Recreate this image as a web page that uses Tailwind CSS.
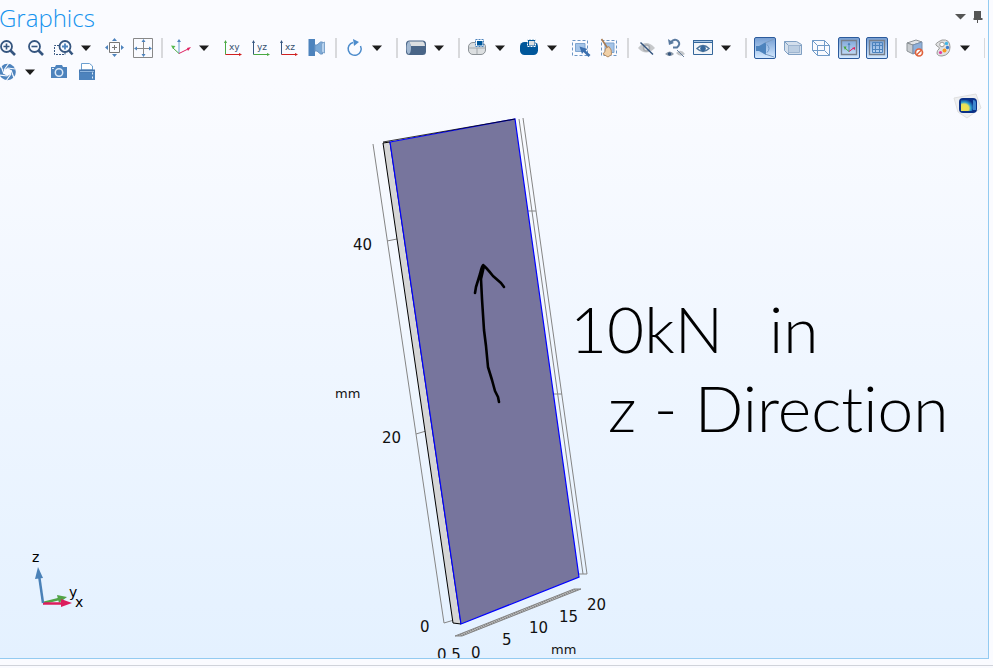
<!DOCTYPE html>
<html lang="en">
<head>
  <meta charset="UTF-8">
  <title>Graphics</title>
  <meta name="viewport" content="width=device-width, initial-scale=1.0">
  <script src="https://cdn.jsdelivr.net/npm/@tailwindcss/browser@4"></script>
</head>
<body class="min-h-screen overflow-x-hidden bg-[#fafbff] font-['Open_Sans',sans-serif]">

<section class="mr-1 border-r border-b border-[#93cbf1]">
  <header class="flex h-9 items-start justify-between">
    <h1 class="-ml-px text-2xl/9 font-light text-[#1593ee]">Graphics</h1>
    <div class="flex items-center gap-0.5 pt-2 pr-0.5">
      <button aria-label="Window menu" class="flex h-4 w-4 items-center justify-center">
        <svg class="h-4 w-4" viewBox="0 0 16 16"><path d="M3 6h11l-5.500 5.500z" fill="#555"/></svg>
      </button>
      <button aria-label="Pin" class="flex h-4 w-4 items-center justify-center">
        <svg class="h-4 w-4" viewBox="0 0 16 16"><path d="M4 3h7v7h1.500v2h-9v-2H4z" fill="#555"/><path d="M7.500 12v3" stroke="#555"/></svg>
      </button>
    </div>
  </header>

  <!-- Toolbar -->
  <div role="toolbar" aria-label="Graphics toolbar" class="flex flex-col">
    <div class="-ml-[6px] flex h-6 items-center">
      <button aria-label="Zoom in" class="flex w-7 shrink-0 justify-center">
        <svg class="h-[22px] w-[22px]" viewBox="0 0 22 22" fill="none"><circle cx="9.500" cy="9.500" r="5.500" stroke="#35557f" stroke-width="1.800"/><path d="M13.500 13.500l4.500 4.500" stroke="#35557f" stroke-width="2.600"/><path d="M6.500 9.500h6M9.500 6.500v6" stroke="#35557f" stroke-width="1.600"/></svg>
      </button>
      <button aria-label="Zoom out" class="flex w-7 shrink-0 justify-center">
        <svg class="h-[22px] w-[22px]" viewBox="0 0 22 22" fill="none"><circle cx="9.500" cy="9.500" r="5.500" stroke="#35557f" stroke-width="1.800"/><path d="M13.500 13.500l4.500 4.500" stroke="#35557f" stroke-width="2.600"/><path d="M6.500 9.500h6" stroke="#35557f" stroke-width="1.600"/></svg>
      </button>
      <button aria-label="Zoom box" class="flex w-7 shrink-0 justify-center">
        <svg class="h-[22px] w-[22px]" viewBox="0 0 22 22" fill="none"><path d="M6 8.500H1.500v9H12v-2" stroke="#35557f" stroke-dasharray="2 1"/><circle cx="12" cy="9.500" r="5.500" fill="#fafbff" stroke="#35557f" stroke-width="1.800"/><path d="M16 13.500l3.500 4" stroke="#35557f" stroke-width="2.600"/><path d="M9 9.500h6M12 6.500v6" stroke="#4d83bd" stroke-width="1.800"/></svg>
      </button>
      <button aria-label="Zoom options" class="w-[23px] shrink-0"><svg class="ml-[3px] h-[10px] w-[10px]" viewBox="0 0 10 10"><path d="M0 2.500h10l-5 5.500z" fill="#1d1d1d"/></svg></button>
      <button aria-label="Zoom to selection" class="flex w-7 shrink-0 justify-center">
        <svg class="h-[22px] w-[22px]" viewBox="0 0 22 22" fill="none"><path d="M5.500 5.500h10v10h-10zM8 10.500h5M10.500 8v5" stroke="#777"/><path d="M8 4l2.500-3L13 4zM8 17l2.500 3 2.500-3zM4 8l-3 2.500L4 13zM17 8l3 2.500-3 2.500z" fill="#4d83bd"/></svg>
      </button>
      <button aria-label="Zoom extents" class="flex w-7 shrink-0 justify-center">
        <svg class="h-[22px] w-[22px]" viewBox="0 0 22 22" fill="none"><path d="M1.500 1.500h19v19h-19z" stroke="#888"/><path d="M3 11.500h16M11.500 3v16" stroke="#888"/><path d="M9.500 5l2-3 2 3zM9.500 17l2 3 2-3zM5 9.500l-3 2 3 2zM17 9.500l3 2-3 2z" fill="#4d83bd"/></svg>
      </button>
      <span class="mx-[4px] h-5 w-[2px] shrink-0 bg-[#d8d9dc]"></span>
      <button aria-label="Go to default view" class="flex w-7 shrink-0 justify-center">
        <svg class="h-[22px] w-[22px]" viewBox="0 0 22 22" fill="none"><path d="M9 16.500V5" stroke="#6b9fd0"/><path d="M9 16.500l-6-5.500" stroke="#49a942"/><path d="M9 16.500l10-5" stroke="#df2060"/><path d="M7 5l2-3 2 3z" fill="#4d83bd"/><path d="M1 8.500l4.500.5L3 12z" fill="#55b94d"/><path d="M21 10l-3 4-1-3z" fill="#df2060"/></svg>
      </button>
      <button aria-label="View options" class="w-6 shrink-0"><svg class="ml-[4px] h-[10px] w-[10px]" viewBox="0 0 10 10"><path d="M0 2.500h10l-5 5.500z" fill="#1d1d1d"/></svg></button>
      <button aria-label="Go to XY view" class="flex w-7 shrink-0 justify-center">
        <svg class="h-[22px] w-[22px]" viewBox="0 0 22 22"><path d="M3.500 17.500V4" stroke="#49a942"/><path d="M2 6l1.500-3L5 6z" fill="#49a942"/><path d="M3.500 17.500H18" stroke="#d02020"/><path d="M17 16l3 1.500-3 1.500z" fill="#d02020"/><text x="7" y="13" font-size="9" font-family="DejaVu Sans" fill="#35506f">xy</text></svg>
      </button>
      <button aria-label="Go to YZ view" class="flex w-7 shrink-0 justify-center">
        <svg class="h-[22px] w-[22px]" viewBox="0 0 22 22"><path d="M3.500 17.500V4" stroke="#35557f"/><path d="M2 6l1.500-3L5 6z" fill="#35557f"/><path d="M3.500 17.500H18" stroke="#49a942"/><path d="M17 16l3 1.500-3 1.500z" fill="#49a942"/><text x="7" y="13" font-size="9" font-family="DejaVu Sans" fill="#35506f">yz</text></svg>
      </button>
      <button aria-label="Go to XZ view" class="flex w-7 shrink-0 justify-center">
        <svg class="h-[22px] w-[22px]" viewBox="0 0 22 22"><path d="M3.500 17.500V4" stroke="#35557f"/><path d="M2 6l1.500-3L5 6z" fill="#35557f"/><path d="M3.500 17.500H18" stroke="#d02020"/><path d="M17 16l3 1.500-3 1.500z" fill="#d02020"/><text x="7" y="13" font-size="9" font-family="DejaVu Sans" fill="#35506f">xz</text></svg>
      </button>
      <button aria-label="Camera projection" class="flex w-7 shrink-0 justify-center">
        <svg class="h-[22px] w-[22px]" viewBox="0 0 22 22"><path d="M2.500 2h6.500v17H2.500z" fill="#4d83bd"/><path d="M9 8h2l3.500-3h2v12h-2L11 14H9z" fill="#7ba9d7" stroke="#6a94c3"/><path d="M15.500 6.500l3-1.500v11l-3-1z" fill="#b5d1ee" stroke="#7fa5cc"/></svg>
      </button>
      <span class="mx-[4px] h-5 w-[2px] shrink-0 bg-[#d8d9dc]"></span>
      <button aria-label="Rotate" class="flex w-7 shrink-0 justify-center">
        <svg class="h-[22px] w-[22px]" viewBox="0 0 22 22" fill="none"><path d="M9 5.500A6.500 6.500 0 1 0 16.500 9" stroke="#4d8ccc" stroke-width="1.500"/><path d="M9 2l6 3-5 4z" fill="#4d8ccc"/></svg>
      </button>
      <button aria-label="Rotate options" class="w-[23px] shrink-0"><svg class="ml-[3px] h-[10px] w-[10px]" viewBox="0 0 10 10"><path d="M0 2.500h10l-5 5.500z" fill="#1d1d1d"/></svg></button>
      <span class="mx-[4px] h-5 w-[2px] shrink-0 bg-[#d8d9dc]"></span>
      <button aria-label="Scene appearance" class="flex w-7 shrink-0 justify-center">
        <svg class="h-[22px] w-[22px]" viewBox="0 0 22 22"><rect x="1" y="3.500" width="20" height="14.500" rx="3.500" fill="#496587"/><path d="M4 4.500h14q2 1 2 4.500H6z" fill="#dcdfe1"/><path d="M3.500 4.500q2.500 1 2.500 6.500t-2.500 6q-2-1-2-6t2-6.500z" fill="#a3b9d2"/></svg>
      </button>
      <button aria-label="Scene appearance options" class="w-6 shrink-0"><svg class="ml-[4px] h-[10px] w-[10px]" viewBox="0 0 10 10"><path d="M0 2.500h10l-5 5.500z" fill="#1d1d1d"/></svg></button>
      <span class="mx-[4px] h-5 w-[2px] shrink-0 bg-[#d8d9dc]"></span>
      <button aria-label="Select objects" class="flex w-7 shrink-0 justify-center">
        <svg class="h-[22px] w-[22px]" viewBox="0 0 22 22"><rect x="1.500" y="5.500" width="17" height="12" rx="4.500" fill="#dcdfe1" stroke="#8b9196"/><path d="M1.500 11h17M10 11v6" stroke="#a4a9ad"/><path d="M8.500 2.500h8v7h-8z" fill="#fff" stroke="#4d83bd" stroke-dasharray="2 1"/><path d="M10 4h5.500v4.500H10z" fill="#00579b"/></svg>
      </button>
      <button aria-label="Select objects options" class="w-[23px] shrink-0"><svg class="ml-[3px] h-[10px] w-[10px]" viewBox="0 0 10 10"><path d="M0 2.500h10l-5 5.500z" fill="#1d1d1d"/></svg></button>
      <button aria-label="Select domains" class="flex w-7 shrink-0 justify-center">
        <svg class="h-[22px] w-[22px]" viewBox="0 0 22 22"><rect x="2" y="5" width="18" height="13" rx="4.500" fill="#00579b"/><path d="M9.500 2.500h8v7h-8z" fill="#00579b" stroke="#fff" stroke-dasharray="2 1"/><path d="M11 4h5.500v4.500H11z" fill="#dcdfe1"/></svg>
      </button>
      <button aria-label="Select domains options" class="w-6 shrink-0"><svg class="ml-[4px] h-[10px] w-[10px]" viewBox="0 0 10 10"><path d="M0 2.500h10l-5 5.500z" fill="#1d1d1d"/></svg></button>
      <button aria-label="Select box" class="flex w-7 shrink-0 justify-center">
        <svg class="h-[22px] w-[22px]" viewBox="0 0 22 22"><path d="M2.500 3.500h15v15h-15z" fill="none" stroke="#6b95c4" stroke-dasharray="3 2"/><path d="M5.500 6.500h9.500v8H5.500z" fill="#a4c4e8" stroke="#7fa5d0"/><path d="M9.500 9.500l8 2.500-2 1.500 5 4.500-2 2-5-5-1.500 2z" fill="#3b6fae"/></svg>
      </button>
      <button aria-label="Deselect box" class="flex w-7 shrink-0 justify-center">
        <svg class="h-[22px] w-[22px]" viewBox="0 0 22 22"><path d="M3.500 3.500h15v15h-15z" fill="none" stroke="#6b95c4" stroke-dasharray="3 2"/><path d="M7 6h9v9.500H7z" fill="#a4c4e8" stroke="#7fa5d0"/><path d="M3.500 2l6 9" stroke="#a87b52" stroke-width="1.600"/><path d="M7.500 11.500l3.500-2q3 3 2.500 8l-3.500 2.500-5-3q2.500-2 2.500-5.500z" fill="#f0d0a7" stroke="#b58d65"/></svg>
      </button>
      <span class="mx-[4px] h-5 w-[2px] shrink-0 bg-[#d8d9dc]"></span>
      <button aria-label="Hide selected" class="flex w-7 shrink-0 justify-center">
        <svg class="h-[22px] w-[22px]" viewBox="0 0 22 22" fill="none"><path d="M2 11q8-10 17 0q-9 9-17 0z" fill="#c6c8cb"/><circle cx="10.500" cy="11" r="3" fill="#e3e4e6" stroke="#a9acb1" stroke-width="1.500"/><path d="M4.500 5.500l12.500 12" stroke="#35557f" stroke-width="1.500"/></svg>
      </button>
      <button aria-label="Reset hiding" class="flex w-7 shrink-0 justify-center">
        <svg class="h-[22px] w-[22px]" viewBox="0 0 22 22" fill="none"><path d="M7 5q4-4 7-1t-1 6.500H9" stroke="#59799f" stroke-width="2"/><path d="M4 2l1 6 5-2z" fill="#59799f"/><path d="M1 17q5-5 9 0q-4 4-9 0z" fill="#8d9aa9"/><circle cx="5.500" cy="17" r="1.700" fill="#35557f"/><path d="M12 16q5-5 9 1q-5 4-9-1z" fill="#c2c5c9"/><path d="M13 13l7 7" stroke="#667f9d"/></svg>
      </button>
      <button aria-label="View hidden only" class="flex w-7 shrink-0 justify-center">
        <svg class="h-[22px] w-[22px]" viewBox="0 0 22 22"><path d="M1.500 3.500h19v14h-19z" fill="#f2f5f9" stroke="#35679b"/><path d="M1 3h20v3H1z" fill="#35679b"/><path d="M2 4.500h18" stroke="#a9c6e4"/><path d="M5 11.500q6-6 12 0q-6 6-12 0z" fill="#fff" stroke="#4d759c" stroke-width="1.500"/><circle cx="11" cy="11.500" r="2.800" fill="#35679b"/></svg>
      </button>
      <button aria-label="Hiding options" class="w-6 shrink-0"><svg class="ml-[4px] h-[10px] w-[10px]" viewBox="0 0 10 10"><path d="M0 2.500h10l-5 5.500z" fill="#1d1d1d"/></svg></button>
      <span class="mx-[4px] h-5 w-[2px] shrink-0 bg-[#d8d9dc]"></span>
      <button aria-label="Scene light" aria-pressed="true" class="mx-[3px] h-[22px] w-[22px] shrink-0 rounded-xs border border-[#2c5b9c] bg-linear-to-b from-[#779fd3] to-[#d4e9ff]">
        <svg class="h-5 w-5" viewBox="0 0 20 20"><path d="M1 8h3l7-4v13l-7-4H1z" fill="#4d83bd"/><path d="M10 5l9-4M10 16l9 3" stroke="#7d9dc2"/><path d="M12 6.500q4 4 0 8" fill="none" stroke="#6d98c9"/></svg>
      </button>
      <button aria-label="Transparency" class="flex w-7 shrink-0 justify-center">
        <svg class="h-[22px] w-[22px]" viewBox="0 0 22 22" stroke="#7f9fc3"><path d="M2.500 4.500h12l5 3v10h-13l-4-4z" fill="#d4dfec"/><path d="M2.500 4.500l4 4h13M6.500 8.500v9" fill="none"/><path d="M6.500 8.500h11v7h-11z" fill="#bccee2" stroke="#9eb5d0"/></svg>
      </button>
      <button aria-label="Wireframe rendering" class="flex w-7 shrink-0 justify-center">
        <svg class="h-[22px] w-[22px]" viewBox="0 0 22 22" fill="none" stroke="#719bc8"><path d="M2.500 3.500h12v10h-12zM7.500 8.500h12v10h-12zM2.500 3.500l5 5M14.500 3.500l5 5M2.500 13.500l5 5M14.500 13.500l5 5"/></svg>
      </button>
      <button aria-label="Show axis orientation" aria-pressed="true" class="mx-[3px] h-[22px] w-[22px] shrink-0 rounded-xs border border-[#2c5b9c] bg-linear-to-b from-[#779fd3] to-[#d4e9ff]">
        <svg class="h-5 w-5" viewBox="0 0 20 20" fill="none"><path d="M2.500 2.500h15v14h-15z" stroke="#777f8b" stroke-width="1.300"/><path d="M10 13.500V5" stroke="#4d83bd"/><path d="M8.500 7L10 4.500 11.500 7z" fill="#4d83bd"/><path d="M10 13.500L6 10" stroke="#49a942"/><path d="M4.500 8.500h3L6 12z" fill="#49a942"/><path d="M10 13.500l4-3" stroke="#df2060"/><path d="M16 9v3l-3-2z" fill="#df2060"/></svg>
      </button>
      <button aria-label="Show grid" aria-pressed="true" class="mx-[3px] h-[22px] w-[22px] shrink-0 rounded-xs border border-[#2c5b9c] bg-linear-to-b from-[#779fd3] to-[#d4e9ff]">
        <svg class="h-5 w-5" viewBox="0 0 20 20" fill="none"><path d="M2.500 2.500h15v14h-15z" stroke="#777f8b" stroke-width="1.300"/><path d="M5.500 4.500h10v10h-10zM8.500 4.500v10M12.500 4.500v10M5.500 7.500h10M5.500 11.500h10" stroke="#4d83bd"/></svg>
      </button>
      <span class="mx-[4px] h-5 w-[2px] shrink-0 bg-[#d8d9dc]"></span>
      <button aria-label="Clipping" class="flex w-7 shrink-0 justify-center">
        <svg class="h-[22px] w-[22px]" viewBox="0 0 22 22"><path d="M3 6l9-3 6 2-9 3z" fill="#e2e4e6" stroke="#8b9196"/><path d="M3 6l6 2v9l-6-3z" fill="#c8ccd0" stroke="#8b9196"/><path d="M9 8l9-3v8l-9 4z" fill="#8eb0da" stroke="#7890ad"/><circle cx="15" cy="15.500" r="3.500" fill="#fff" stroke="#df623d" stroke-width="1.700"/><path d="M12.500 18l5-5" stroke="#df623d" stroke-width="1.500"/></svg>
      </button>
      <button aria-label="Color theme" class="flex w-7 shrink-0 justify-center">
        <svg class="h-[22px] w-[22px]" viewBox="0 0 22 22"><path d="M10 3q8-1 8 7t-8 9q-5 0-5-3t2-4-2-3 5-6z" fill="#e0e1e2" stroke="#999"/><circle cx="10" cy="7.500" r="2.300" fill="#fff" stroke="#999"/><circle cx="14.500" cy="6.500" r="1.700" fill="#41b6e6"/><circle cx="15.500" cy="10.500" r="1.700" fill="#3a7ccc"/><circle cx="12.500" cy="13.500" r="2" fill="#f59b22"/><circle cx="8.500" cy="15.500" r="1.600" fill="#e5399c"/></svg>
      </button>
      <button aria-label="Color theme options" class="w-[23px] shrink-0"><svg class="ml-[3px] h-[10px] w-[10px]" viewBox="0 0 10 10"><path d="M0 2.500h10l-5 5.500z" fill="#1d1d1d"/></svg></button>
      <span class="mx-[4px] h-5 w-px shrink-0 bg-[#d8d9dc]"></span>
    </div>
    <div class="-ml-[6px] flex h-6 items-center">
      <button aria-label="Image snapshot" class="flex w-7 shrink-0 justify-center">
        <svg class="h-[22px] w-[22px]" viewBox="0 0 22 22"><circle cx="10.500" cy="11" r="8.300" fill="#4d83bd"/><path d="M10.500 7l3.500 2v4l-3.500 2L7 13V9z" fill="#fafbff"/><path d="M7 9l5-7M10.500 7l8 1M14 9l3 8M14 13l-5 7M10.500 15l-8-1M7 13L4 5" stroke="#fafbff" stroke-width="1.200"/></svg>
      </button>
      <button aria-label="Snapshot options" class="w-[23px] shrink-0"><svg class="ml-[3px] h-[10px] w-[10px]" viewBox="0 0 10 10"><path d="M0 2.500h10l-5 5.500z" fill="#1d1d1d"/></svg></button>
      <button aria-label="Camera" class="flex w-7 shrink-0 justify-center">
        <svg class="h-[22px] w-[22px]" viewBox="0 0 22 22"><path d="M3 6h4l1-2h6l1 2h4v11H3z" fill="#4d83bd"/><circle cx="11" cy="11.500" r="3.700" fill="#4d83bd" stroke="#dce9f7" stroke-width="1.500"/><path d="M4 7.500h2" stroke="#dce9f7"/></svg>
      </button>
      <button aria-label="Print" class="flex w-7 shrink-0 justify-center">
        <svg class="h-[22px] w-[22px]" viewBox="0 0 22 22"><path d="M5.500 9V2.500h8l3 2.500v4z" fill="#fff" stroke="#6b9fd0"/><path d="M3 8.500h16V13H3z" fill="#4576ae"/><path d="M3 11.500h16V19H3z" fill="#4d83bd"/><path d="M4 10.500h14" stroke="#8fb6df"/><path d="M16.500 11.500v2M16.500 15.500v2" stroke="#dce9f7"/></svg>
      </button>
    </div>
  </div>

  <!-- Scene -->
  <div class="bg-linear-to-b from-[#fafbff] to-[#e4f1ff]">
    <svg class="block h-auto w-full overflow-hidden" viewBox="0 84 988 574" font-family="DejaVu Sans, sans-serif" role="img" aria-label="Plate geometry">
      <defs>
        <radialGradient id="cube" cx=".25" cy=".75" r=".85"><stop offset="0" stop-color="#f3e34c"/><stop offset=".45" stop-color="#e6df5a"/><stop offset=".65" stop-color="#2e9ed0"/><stop offset="1" stop-color="#0a2a82"/></radialGradient>
        <pattern id="hatch" width="3" height="3" patternUnits="userSpaceOnUse"><path d="M0 0h3v3H0z" fill="#b4b4b4"/><path d="M0 0l3 3" stroke="#888"/></pattern>
      </defs>

      <!-- product logo -->
      <path d="M954 98l22-4 5 14-14 10-9-6z" fill="#eeeff1" stroke="#e0e0e0"/>
      <rect x="959" y="98" width="18" height="15" rx="4" fill="#0b3187"/>
      <path d="M961 100h10q4 6 1 11h-11z" fill="url(#cube)"/>
      <path d="M973 100q3 0 3 3v7h-3z" fill="#3f86cf"/>

      <!-- axis box -->
      <g fill="none" stroke="#858585">
        <path d="M373 144l71 479 10-3M387 241l10-2M416 434l10-3"/>
        <path d="M519 119l64 455M523 118l64 456M578 574h9M528 211h8M554 394h8"/>
      </g>
      <path d="M455 636h7l119-47h-7z" fill="url(#hatch)" stroke="#858585"/>

      <!-- plate -->
      <path d="M383 143l7-1 71 482-8-1z" fill="#d5d5d5" stroke="#000"/>
      <path d="M390 142l125-23 64 458-118 47z" fill="#77759d" stroke="#00f" stroke-width="1.200"/>
      <path d="M383 142l132-23" stroke="#000" stroke-width=".8"/>

      <!-- load arrow -->
      <path d="M499 402l-1-5-3-6-3-11-4-13-2-21-2-16-2-31-1-20 3-13M475 293l1-6 4-13q2-9 3-9 2 1 10 11l8 7 3 4" fill="none" stroke="#000" stroke-width="2.600" stroke-linecap="round" stroke-linejoin="round"/>

      <g font-size="15" fill="#111">
        <text x="353" y="250">40</text>
        <text x="382" y="443">20</text>
        <text x="420" y="632">0</text>
        <text x="437" y="660">0.5</text>
        <text x="471" y="658">0</text>
        <text x="502" y="645">5</text>
        <text x="529" y="633">10</text>
        <text x="559" y="622">15</text>
        <text x="587" y="610">20</text>
      </g>
      <g font-size="13" fill="#111">
        <text x="335" y="398">mm</text>
        <text x="551" y="654">mm</text>
      </g>

      <!-- load note -->
      <g class="[font-variant-ligatures:none]" font-family="Lato, sans-serif" font-weight="300" font-size="64" fill="#000">
        <text x="570" y="353">10kN</text>
        <text x="769" y="353">in</text>
        <text x="608" y="432">z - Direction</text>
      </g>

      <!-- orientation triad -->
      <path d="M43 603l16-4" stroke="#52a447" stroke-width="2.500"/>
      <path d="M57 595l10 2-8 6z" fill="#52a447"/>
      <path d="M43 603.500h20" stroke="#dc1d5d" stroke-width="2.500"/>
      <path d="M61 599l11 4-11 4z" fill="#dc1d5d"/>
      <path d="M43 603l-4-28" stroke="#4a81b8" stroke-width="2.500"/>
      <path d="M38 567l5 11-8 1z" fill="#4a81b8"/>
      <g font-size="14" fill="#000">
        <text x="32" y="562">z</text>
        <text x="69" y="597">y</text>
        <text x="75" y="607">x</text>
      </g>
    </svg>
  </div>
</section>
<div class="mt-[6px] border-t border-[#d0d3da]"></div>

</body>
</html>
